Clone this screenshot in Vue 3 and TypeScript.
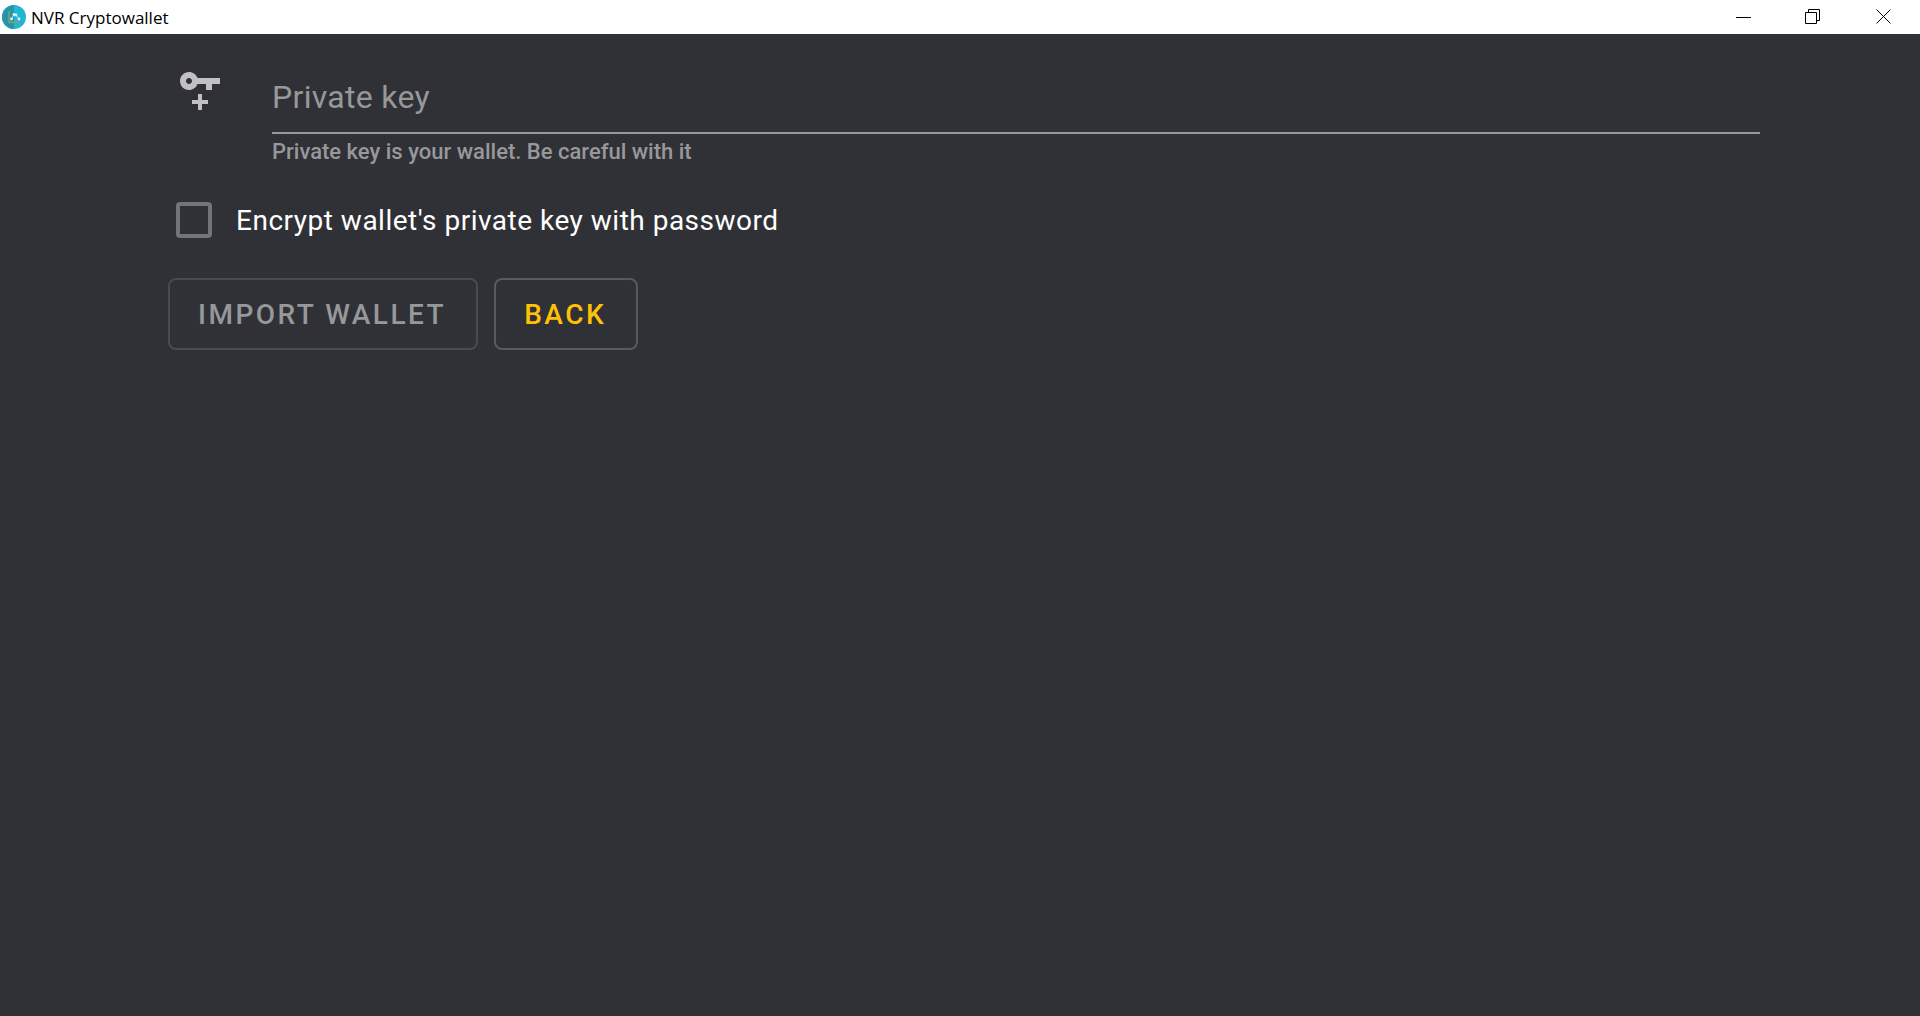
<script setup lang="ts">
import { ref } from 'vue'

const privateKey = ref('')
const encrypt = ref(false)
</script>

<template>
  <div class="window">
    <header class="titlebar">
      <svg class="logo" viewBox="0 0 24 24" aria-hidden="true">
        <circle cx="12" cy="12" r="12" fill="#22b6d4" />
        <path d="M12 0a12 12 0 0 0 0 24z" fill="#2595ad" />
        <path d="M7 6v11.5h11" fill="none" stroke="#8c9c62" stroke-width="1.5" />
        <path d="M9.5 14l2.5-4.5 2 .5 3 4" fill="none" stroke="#b5e0e8" stroke-width="1" />
        <g fill="#dff3f5">
          <circle cx="9.5" cy="14" r="1.4" />
          <circle cx="12" cy="9.5" r="1.4" />
          <circle cx="14" cy="10" r="1.4" />
          <circle cx="17" cy="14" r="1.4" />
        </g>
      </svg>
      <span class="title">NVR Cryptowallet</span>
      <button class="control" type="button" aria-label="Minimize">
        <svg viewBox="0 0 16 16"><path d="M1 8.5h15" /></svg>
      </button>
      <button class="control" type="button" aria-label="Restore">
        <svg viewBox="0 0 16 16"><path d="M.5 3.5h11v11H.5zM3.5 3.5v-3h11v11h-3" /></svg>
      </button>
      <button class="control close" type="button" aria-label="Close">
        <svg viewBox="0 0 16 16"><path d="M.5 .5l14 14M14.5 .5l-14 14" /></svg>
      </button>
    </header>

    <main class="page">
      <form class="form" @submit.prevent>
        <div class="key-row">
          <svg class="key-icon" viewBox="0 0 24 24" aria-hidden="true">
            <path d="M6.5 3C8.46 3 10.13 4.25 10.74 6H22V9H18V12H15V9H10.74C10.13 10.75 8.46 12 6.5 12C4 12 2 10 2 7.5S4 3 6.5 3M6.5 6C5.67 6 5 6.67 5 7.5S5.67 9 6.5 9 8 8.33 8 7.5 7.33 6 6.5 6M8 17H11V14H13V17H16V19H13V22H11V19H8V17Z" />
          </svg>
          <div class="field">
            <input
              v-model="privateKey"
              class="key-input"
              type="text"
              placeholder="Private key"
              aria-label="Private key"
              aria-describedby="key-help"
            />
            <p id="key-help" class="help">Private key is your wallet. Be careful with it</p>
          </div>
        </div>

        <div class="check-row">
          <input id="encrypt" v-model="encrypt" class="checkbox" type="checkbox" />
          <label class="check-label" for="encrypt">Encrypt wallet's private key with password</label>
        </div>

        <div class="actions">
          <button class="btn" type="submit" :disabled="!privateKey">IMPORT WALLET</button>
          <button class="btn" type="button">BACK</button>
        </div>
      </form>
    </main>
  </div>
</template>

<style>
body {
  background: #303136;
}
</style>

<style scoped>
.window {
  min-height: 100vh;
  background: #303136;
  color: #fff;
  font-family: Roboto, sans-serif;
}

.titlebar {
  display: flex;
  align-items: center;
  height: 34px;
  padding-left: 2px;
  background: #fff;
  color: #000;
}

.logo {
  width: 24px;
  height: 24px;
}

.title {
  flex: 1;
  margin-left: 5px;
  padding-top: 2px;
  font-family: "Open Sans", sans-serif;
  font-size: 17px;
  line-height: 24px;
}

.control {
  display: flex;
  align-items: center;
  justify-content: center;
  width: 70px;
  height: 34px;
  padding: 0;
  border: 0;
  background: none;
}

.close {
  width: 72px;
}

.control svg {
  width: 16px;
  height: 16px;
  fill: none;
  stroke: #000;
  stroke-width: 1;
}

.page {
  padding: 32px 160px 0 168px;
}

.key-row {
  display: flex;
  align-items: flex-start;
  padding-left: 8px;
}

.key-icon {
  flex: none;
  width: 48px;
  height: 48px;
  margin-right: 48px;
  fill: #c1c1c3;
}

.field {
  flex: 1;
}

.key-input {
  display: block;
  box-sizing: border-box;
  width: 100%;
  height: 68px;
  padding: 0 0 4px;
  border: 0;
  border-bottom: 2px solid #97989a;
  outline: 0;
  background: none;
  color: #fff;
  font-family: inherit;
  font-size: 32px;
  letter-spacing: 0.009375em;
}

.key-input::placeholder {
  color: #97989a;
  opacity: 1;
}

.help {
  margin: 0;
  padding-top: 4px;
  color: #97989a;
  font-size: 22px;
  font-weight: 500;
  line-height: 28px;
}

.check-row {
  display: flex;
  align-items: center;
  height: 40px;
  margin-top: 34px;
  padding-left: 8px;
}

.check-label {
  padding-top: 2px;
  font-size: 28px;
  line-height: 38px;
  letter-spacing: 0.0178571429em;
}

.checkbox {
  appearance: none;
  box-sizing: border-box;
  width: 36px;
  height: 36px;
  margin: 0 24px 0 0;
  border: 4px solid #737477;
  border-radius: 4px;
}

.checkbox:checked {
  background: #ffc107;
}

.actions {
  display: flex;
  gap: 16px;
  margin-top: 38px;
}

.btn {
  height: 72px;
  padding: 0 30px 0 28px;
  border: 2px solid #595a5e;
  border-radius: 8px;
  background: none;
  color: #ffc107;
  font-family: inherit;
  font-size: 28px;
  font-weight: 500;
  letter-spacing: 0.0892857143em;
}

.btn:disabled {
  border-color: #4a4b4f;
  color: #97989a;
}
</style>
